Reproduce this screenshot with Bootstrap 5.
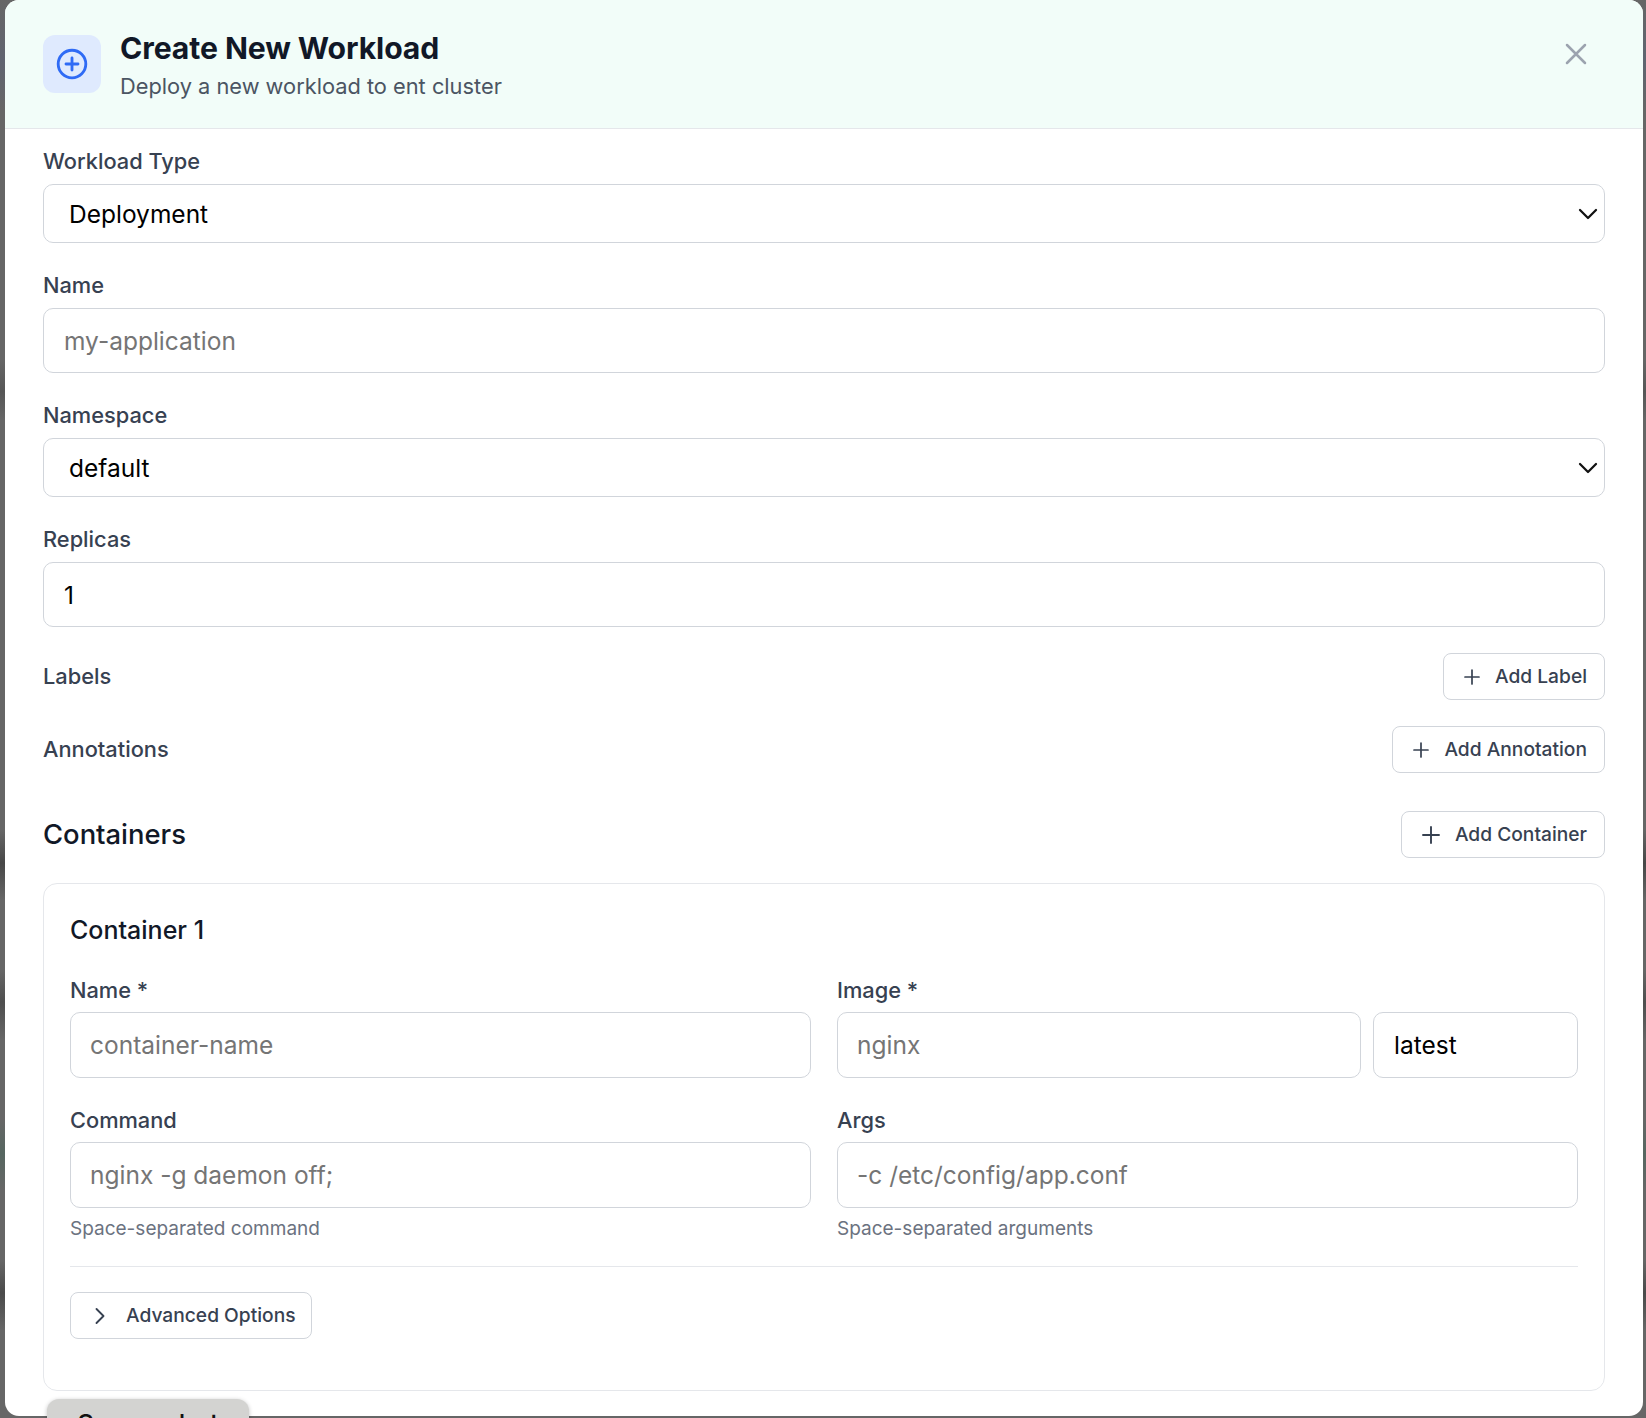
<!DOCTYPE html>
<html lang="en">
<head>
    <meta charset="UTF-8">
    <meta name="viewport" content="width=device-width, initial-scale=1.0">
    <title>Create New Workload</title>
    <link rel="stylesheet" href="https://cdn.jsdelivr.net/npm/bootstrap@5.3.0/dist/css/bootstrap.min.css">
    <style>
        html, body { height: 100%; }
        body {
            font-family: Inter, "Liberation Sans", sans-serif;
            padding: 0 3px 2px 5px;
            overflow: hidden;
            position: relative;
            background: linear-gradient(180deg, #666 0, #5f6470 60px, #666 110px, #666 360px, #565656 391px, #666 420px,
                #666 830px, #474747 863px, #666 900px, #666 970px, #4e4e4e 1002px, #666 1040px, #666 1120px,
                #566660 1153px, #666 1190px, #666 1260px, #4a4a4a 1293px, #666 1330px);
        }
        .panel {
            height: 100%;
            background: #fff;
            border: 0;
            border-radius: 14px;
            overflow: hidden;
        }
        .panel-head {
            height: 129px;
            padding: 0 38px;
            background: #f2fdf9;
            border-bottom: 1px solid #e5e7eb;
            border-radius: 0;
        }
        .head-icon {
            width: 58px;
            height: 58px;
            background: #dfeafe;
            border-radius: 12px;
            color: #2f6bf5;
        }
        .head-group { gap: 19px; }
        .head-text { padding-top: 3px; }
        .head-title { font-size: 30.2px; font-weight: 700; color: #111827; line-height: 38px; letter-spacing: -.1px; margin-bottom: 2px; }
        .head-sub { font-size: 21.8px; color: #4b5563; line-height: 34px; }
        .close-x { color: #9ca3af; margin: -20px 11px 0 0; line-height: 0; border: 0; }
        .panel-body { padding: 16px 38px 0; }
        .field { margin-bottom: 26px; }
        .form-label, .row-label {
            font-size: 21.8px;
            font-weight: 500;
            color: #374151;
            line-height: 32px;
            margin-bottom: 7px;
        }
        .row-label { margin: -2px 0 0; }
        .form-control, .form-select {
            font-family: Inter, "Liberation Sans", sans-serif;
            font-size: 24.5px;
            color: #000;
            border: 1px solid #d1d5db;
            border-radius: 10px;
            box-shadow: none;
        }
        .form-control { height: 65px; padding: 0 19px 0 20px; }
        .form-control::placeholder { color: #757575; opacity: 1; }
        .form-select {
            height: 59px;
            padding: 2px 40px 0 25px;
            background-size: 32px 32px;
            background-position: right 0 center;
            background-image: url("data:image/svg+xml,%3csvg xmlns='http://www.w3.org/2000/svg' viewBox='0 0 24 24'%3e%3cpath fill='none' stroke='%23111' stroke-width='1.7' stroke-linecap='round' stroke-linejoin='round' d='m6 9 6 6 6-6'/%3e%3c/svg%3e");
        }
        .btn-add {
            height: 47px;
            padding: 0 17px 0 19px;
            gap: 14px;
            font-size: 19.2px;
            font-weight: 500;
            color: #374151;
            background: #fff;
            border: 1px solid #d1d5db;
            border-radius: 8px;
        }
        .btn-add svg { flex: none; }
        .btn-adv { padding: 0 15px; gap: 12px; }
        .containers-row { margin-top: 38px; }
        .section-title { font-size: 27.4px; font-weight: 500; color: #111827; line-height: 47px; }
        .container-card { border: 1px solid #e5e7eb; border-radius: 14px; margin-top: 25px; }
        .container-card .card-body { padding: 28px 26px 51px; }
        .container-card .form-control { height: 66px; padding-left: 19px; }
        .container-title { font-size: 25px; font-weight: 500; color: #111827; line-height: 36px; margin-bottom: 26px; }
        .form-row { --bs-gutter-x: 26px; }
        .form-row .form-label { margin-bottom: 6px; }
        .image-inputs { gap: 12px; }
        .container-card .tag-input { flex: 0 0 205px; width: 205px; padding-left: 20px; }
        .form-text { font-size: 19px; color: #6b7280; line-height: 28px; margin-top: 7px; }
        .divider { border-top: 1px solid #e5e7eb; margin: 23px 0 25px; opacity: 1; }
        .screenshot-pill {
            position: absolute;
            left: 47px;
            top: 1399px;
            width: 202px;
            height: 60px;
            padding-top: 5px;
            text-align: center;
            font-size: 26px;
            font-weight: 500;
            color: #111;
            background: #d3d3d1;
            border-radius: 12px;
            box-shadow: 0 1px 4px rgba(0, 0, 0, .25);
        }
    </style>
</head>
<body>
    <div class="modal-content panel">
        <div class="modal-header panel-head d-flex align-items-center justify-content-between">
            <div class="d-flex align-items-center head-group">
                <div class="head-icon d-flex align-items-center justify-content-center">
                    <svg width="36" height="36" viewBox="0 0 24 24" fill="none" stroke="currentColor" stroke-width="1.9" stroke-linecap="round" stroke-linejoin="round"><circle cx="12" cy="12" r="9.2"/><path d="M8 12h8M12 8v8"/></svg>
                </div>
                <div class="head-text">
                    <div class="head-title">Create New Workload</div>
                    <div class="head-sub">Deploy a new workload to ent cluster</div>
                </div>
            </div>
            <button type="button" class="btn p-0 close-x" aria-label="Close">
                <svg width="36" height="36" viewBox="0 0 24 24" fill="none" stroke="currentColor" stroke-width="1.7" stroke-linecap="round"><path d="M18 6 6 18M6 6l12 12"/></svg>
            </button>
        </div>

        <div class="modal-body panel-body">
            <div class="field">
                <label class="form-label d-block">Workload Type</label>
                <select class="form-select"><option>Deployment</option></select>
            </div>
            <div class="field">
                <label class="form-label d-block">Name</label>
                <input type="text" class="form-control" placeholder="my-application">
            </div>
            <div class="field">
                <label class="form-label d-block">Namespace</label>
                <select class="form-select"><option>default</option></select>
            </div>
            <div class="field">
                <label class="form-label d-block">Replicas</label>
                <input type="text" class="form-control" value="1">
            </div>

            <div class="field d-flex align-items-center justify-content-between">
                <span class="row-label">Labels</span>
                <button type="button" class="btn btn-add d-flex align-items-center">
                    <svg width="18" height="18" viewBox="0 0 18 18" fill="none" stroke="currentColor" stroke-width="1.7" stroke-linecap="round"><path d="M2 9h14M9 2v14"/></svg>Add Label
                </button>
            </div>
            <div class="d-flex align-items-center justify-content-between">
                <span class="row-label">Annotations</span>
                <button type="button" class="btn btn-add d-flex align-items-center">
                    <svg width="18" height="18" viewBox="0 0 18 18" fill="none" stroke="currentColor" stroke-width="1.7" stroke-linecap="round"><path d="M2 9h14M9 2v14"/></svg>Add Annotation
                </button>
            </div>

            <div class="d-flex align-items-center justify-content-between containers-row">
                <span class="section-title">Containers</span>
                <button type="button" class="btn btn-add d-flex align-items-center">
                    <svg width="20" height="20" viewBox="0 0 20 20" fill="none" stroke="currentColor" stroke-width="1.9" stroke-linecap="round"><path d="M2 10h16M10 2v16"/></svg>Add Container
                </button>
            </div>

            <div class="card container-card">
                <div class="card-body">
                    <div class="container-title">Container 1</div>
                    <div class="row form-row field">
                        <div class="col-6">
                            <label class="form-label d-block">Name *</label>
                            <input type="text" class="form-control" placeholder="container-name">
                        </div>
                        <div class="col-6">
                            <label class="form-label d-block">Image *</label>
                            <div class="d-flex image-inputs">
                                <input type="text" class="form-control" placeholder="nginx">
                                <input type="text" class="form-control tag-input" value="latest">
                            </div>
                        </div>
                    </div>
                    <div class="row form-row">
                        <div class="col-6">
                            <label class="form-label d-block">Command</label>
                            <input type="text" class="form-control" placeholder="nginx -g daemon off;">
                            <div class="form-text">Space-separated command</div>
                        </div>
                        <div class="col-6">
                            <label class="form-label d-block">Args</label>
                            <input type="text" class="form-control" placeholder="-c /etc/config/app.conf">
                            <div class="form-text">Space-separated arguments</div>
                        </div>
                    </div>
                    <div class="divider"></div>
                    <button type="button" class="btn btn-add btn-adv d-flex align-items-center">
                        <svg width="28" height="28" viewBox="0 0 24 24" fill="none" stroke="currentColor" stroke-width="1.6" stroke-linecap="round" stroke-linejoin="round"><path d="m9 18 6-6-6-6"/></svg>Advanced Options
                    </button>
                </div>
            </div>
        </div>
    </div>
    <div class="screenshot-pill">Screenshot</div>

    <script src="https://cdn.jsdelivr.net/npm/bootstrap@5.3.0/dist/js/bootstrap.bundle.min.js"></script>
</body>
</html>
